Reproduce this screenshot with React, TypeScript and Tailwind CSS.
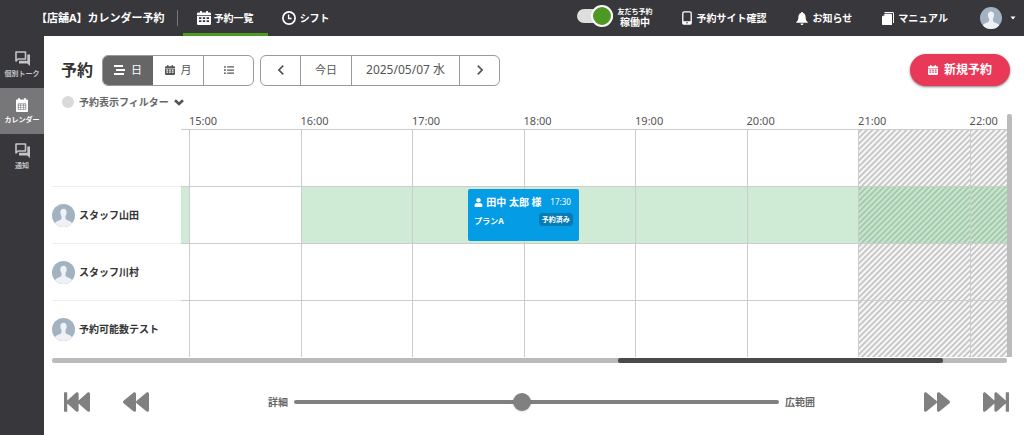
import React from "react";
import { FaUser, FaListUl, FaFastBackward, FaBackward, FaForward, FaFastForward } from "react-icons/fa";
import { MdKeyboardArrowLeft, MdKeyboardArrowRight } from "react-icons/md";

function Avatar({ className }: { className: string }) {
  return (
    <svg viewBox="0 0 24 24" className={className} aria-hidden="true">
      <circle cx="12" cy="12" r="12" fill="#a3b2c1" />
      <path
        d="M12 5c2 0 3.300 1.400 3.300 3.700 0 1.700-.5 3-1.200 3.900v2.800c.3.900 1.500 1.500 3.300 2.100 1.700.6 2.900 1.400 3.500 2.600A12 12 0 0 1 12 24a12 12 0 0 1-8.900-3.900c.6-1.200 1.800-2 3.500-2.600 1.800-.6 3-1.200 3.300-2.100v-2.800c-.7-.9-1.200-2.200-1.200-3.900C8.700 6.400 10 5 12 5z"
        fill="#eef2f7"
      />
    </svg>
  );
}

function ChatIcon() {
  return (
    <svg viewBox="0 0 15 15" className="size-[15px]" aria-hidden="true">
      <path d="M1 1h9.500v7H3L1 10z" fill="none" stroke="currentColor" strokeWidth="1.600" strokeLinejoin="round" />
      <path d="M12.300 3.500H15V15l-2.800-2.600H4V9.700h8.300z" fill="currentColor" />
    </svg>
  );
}

function CalendarGrid({ className }: { className: string }) {
  return (
    <svg viewBox="0 0 14 14" className={className} fill="currentColor" aria-hidden="true">
      <path
        fillRule="evenodd"
        d="M3 0h1.800v1.600h4.400V0H11v1.600h1.600c.8 0 1.400.5 1.400 1.300V4.200H0V2.900c0-.8.6-1.300 1.400-1.300H3zM0 5h14v7.700c0 .8-.6 1.300-1.400 1.300H1.400C.6 14 0 13.500 0 12.700zM2 6.200v1.800h2.400V6.200zm3.800 0v1.800h2.400V6.200zm3.800 0v1.800H12V6.200zM2 9.200V11h2.400V9.200zm3.800 0V11h2.400V9.200zm3.800 0V11H12V9.200z"
      />
    </svg>
  );
}

function SolidCalendar({ className }: { className: string }) {
  return (
    <svg viewBox="0 0 12 14" className={className} aria-hidden="true">
      <path
        fill="currentColor"
        fillRule="evenodd"
        d="M2.200 0h1.600v1.500h4.400V0h1.600v1.500h1c.7 0 1.200.5 1.200 1.200v10c0 .7-.5 1.300-1.200 1.300H1.200C.5 14 0 13.400 0 12.700v-10c0-.7.5-1.200 1.200-1.200h1zM1.800 5.500v6.300h8.400V5.500z"
      />
      <path
        fill="currentColor"
        d="M2.600 6.300h1.900v1.300H2.600zm2.500 0h1.900v1.300H5.100zm2.500 0h1.900v1.300H7.600zM2.600 8.100h1.900v1.300H2.600zm2.500 0h1.900v1.300H5.100zm2.500 0h1.900v1.300H7.600zM2.600 9.900h1.900v1.300H2.600zm2.500 0h1.900v1.300H5.100zm2.500 0h1.900v1.300H7.600z"
      />
    </svg>
  );
}

function ClockIcon() {
  return (
    <svg viewBox="0 0 14 14" className="size-3.5" fill="none" stroke="#fff" aria-hidden="true">
      <circle cx="7" cy="7" r="6.100" strokeWidth="1.700" />
      <path d="M6.600 3.500v4h3" strokeWidth="1.400" />
    </svg>
  );
}

function TimelineIcon() {
  return (
    <svg viewBox="0 0 11 10" className="h-2.5 w-[11px]" stroke="currentColor" strokeWidth="1.800" aria-hidden="true">
      <path d="M0 1h9M2 5h9M0 9h10" />
    </svg>
  );
}

function PhoneIcon() {
  return (
    <svg viewBox="0 0 10 14" className="h-3.5 w-2.5" aria-hidden="true">
      <rect x="0.800" y="0.800" width="8.400" height="12.400" rx="1.300" fill="none" stroke="#fff" strokeWidth="1.300" />
      <path d="M1 10.200h8V13H1z" fill="#fff" />
      <circle cx="5" cy="11.700" r="0.800" fill="#38373c" />
    </svg>
  );
}

function BellIcon() {
  return (
    <svg viewBox="0 0 12 13" className="h-[13px] w-3" fill="#fff" aria-hidden="true">
      <path d="M6 0c.6 0 1 .4 1 1 1.700.5 2.600 2 2.600 3.900 0 2.700.8 3.900 2.200 5.300v.6H.2v-.6C1.600 8.800 2.400 7.600 2.400 4.900 2.400 3 3.300 1.500 5 1c0-.6.4-1 1-1zM4.600 11.400h2.800C7.400 12.300 6.800 13 6 13s-1.400-.7-1.400-1.600z" />
    </svg>
  );
}

function BookIcon() {
  return (
    <svg viewBox="0 0 12 13" className="h-[13px] w-3" aria-hidden="true">
      <path d="M3 0h7.500c.8 0 1.500.7 1.500 1.500V11h-1V1.500c0-.3-.2-.5-.5-.5H2z" fill="#fff" />
      <path d="M2.600 1.800h6.600c.5 0 .8.3.8.8V13H1c-.6 0-1-.4-1-1V4.400z" fill="#fff" />
      <path d="M.4 3.800 2.300 1.900v1.900z" fill="#38373c" />
    </svg>
  );
}

const hours = ["15:00", "16:00", "17:00", "18:00", "19:00", "20:00", "21:00", "22:00"];

const rows = [
  { name: "", open: false },
  { name: "スタッフ山田", open: true },
  { name: "スタッフ川村", open: false },
  { name: "予約可能数テスト", open: false },
];

const hatch =
  "bg-[repeating-linear-gradient(-45deg,#c8c8c8_0px,#c8c8c8_1px,#f8f8f8_2px,#f8f8f8_3px,#c8c8c8_4px)]";
const hatchOpen =
  "bg-[repeating-linear-gradient(-45deg,#a6caae_0px,#a6caae_1px,#c9e6cf_2px,#c9e6cf_3px,#a6caae_4px)]";

function cellColor(open: boolean, index: number) {
  if (index >= 6) return open ? hatchOpen : hatch;
  return open && index > 0 ? "bg-[#d0ebd5]" : "";
}

function Booking() {
  return (
    <a
      href="#booking"
      className="absolute top-0.5 left-1/2 z-10 flex h-[52px] w-full flex-col gap-0.5 rounded-xs bg-[#059ce6] pt-1 pr-1.5 pl-1.5 text-white"
    >
      <span className="flex items-center gap-[3px] leading-[18px] whitespace-nowrap">
        <FaUser className="size-[9px] shrink-0" />
        <span className="text-[10px] font-bold">田中 太郎 様</span>
        <span className="ml-auto pr-0.5 text-[8px]">17:30</span>
      </span>
      <span className="flex items-start justify-between">
        <span className="pt-0.5 text-[8px] leading-3 font-bold">プランA</span>
        <span className="rounded-sm bg-[#087bb5] px-[3px] text-[7px] leading-[13px] font-bold">予約済み</span>
      </span>
    </a>
  );
}

function Header() {
  return (
    <header className="flex h-9 items-center bg-[#38373c] pr-2 pl-9 text-[10px] font-bold whitespace-nowrap text-white">
      <h1 className="text-[11px]">【店舗A】カレンダー予約</h1>
      <div className="ml-3 h-4 w-px bg-[#77767a]" />
      <nav className="ml-[5px] flex h-full">
        <a href="#list" className="flex items-center gap-[3px] border-b-3 border-[#4c9a21] px-3.5 pt-[3px]">
          <CalendarGrid className="size-3.5" />
          予約一覧
        </a>
        <a href="#shift" className="flex items-center gap-1 px-3.5">
          <ClockIcon />
          シフト
        </a>
      </nav>
      <div className="ml-auto flex items-center">
        <label className="flex cursor-pointer items-center gap-1">
          <input type="checkbox" role="switch" defaultChecked className="peer sr-only" />
          <span className="mb-1 flex h-3.5 w-9 items-center justify-end rounded-full bg-[#dedede]">
            <span className="size-[22px] shrink-0 rounded-full border-2 border-white bg-[#4c9a21]" />
          </span>
          <span className="flex flex-col items-center text-[10px] leading-[13px]">
            <span className="text-[7px] leading-[9px]">友だち予約</span>
            稼働中
          </span>
        </label>
        <a href="#site" className="ml-[30px] flex items-center gap-1">
          <PhoneIcon />
          予約サイト確認
        </a>
        <a href="#news" className="ml-[30px] flex items-center gap-1">
          <BellIcon />
          お知らせ
        </a>
        <a href="#manual" className="ml-[30px] flex items-center gap-1">
          <BookIcon />
          マニュアル
        </a>
        <button type="button" aria-label="アカウント" className="ml-8 flex items-center gap-2">
          <Avatar className="size-[22px]" />
          <svg viewBox="0 0 6 4" className="h-1 w-1.5" fill="#fff" aria-hidden="true">
            <path d="M.5.5h5L3 3.500z" />
          </svg>
        </button>
      </div>
    </header>
  );
}

const side =
  "flex h-[46px] flex-col items-center justify-center gap-[3px] text-[7px] leading-[10px] font-bold whitespace-nowrap";

function Sidebar() {
  return (
    <nav className="w-11 shrink-0 bg-[#38373c] pt-1.5 text-[#c4c4c6]">
      <a href="#talk" className={side}>
        <ChatIcon />
        個別トーク
      </a>
      <a href="#calendar" className={side + " bg-[#77777a] text-white"}>
        <SolidCalendar className="h-3.5 w-3" />
        カレンダー
      </a>
      <a href="#notice" className={side}>
        <ChatIcon />
        通知
      </a>
    </nav>
  );
}

function Toolbar() {
  return (
    <div className="flex items-center pr-3.5 pl-[17px] text-[11px] whitespace-nowrap text-[#555]">
      <h2 className="text-base font-bold text-[#333]">予約</h2>
      <div className="ml-[9px] flex h-[31px] overflow-hidden rounded-md border border-[#999]">
        <button type="button" className="flex w-[50px] items-center justify-center gap-1.5 bg-[#666] text-white">
          <TimelineIcon />日
        </button>
        <button type="button" className="flex w-[50px] items-center justify-center gap-1.5">
          <CalendarGrid className="size-2.5" />月
        </button>
        <button
          type="button"
          aria-label="リスト"
          className="flex w-[50px] items-center justify-center border-l border-[#999]"
        >
          <FaListUl className="size-2.5" />
        </button>
      </div>
      <div className="ml-1.5 flex h-[31px] divide-x divide-[#999] overflow-hidden rounded-md border border-[#999]">
        <button type="button" aria-label="前の日" className="flex w-10 items-center justify-center">
          <MdKeyboardArrowLeft className="size-5" />
        </button>
        <button type="button" className="w-[51px]">今日</button>
        <button type="button" className="w-[108px] text-xs">2025/05/07 水</button>
        <button type="button" aria-label="次の日" className="flex w-[39px] items-center justify-center">
          <MdKeyboardArrowRight className="size-5" />
        </button>
      </div>
      <button
        type="button"
        className="ml-auto flex h-8 w-[100px] items-center justify-center gap-1.5 rounded-full bg-[#e83a58] text-xs font-bold text-white shadow-sm shadow-black/40"
      >
        <CalendarGrid className="size-2.5" />
        新規予約
      </button>
    </div>
  );
}

function Timeline() {
  return (
    <div className="pr-3 pl-2">
      <div className="flex">
        <div className="min-w-0 flex-1">
          <table className="w-full table-fixed border-separate border-spacing-0 text-[#333]">
            <colgroup>
              <col className="w-[129px]" />
              <col className="w-2" />
              <col span={22} />
            </colgroup>
            <thead>
              <tr className="h-[17px] text-left text-[11px] leading-[17px] text-[#555]">
                <td />
                <td />
                {hours.map((hour, i) => (
                  <th key={hour} scope="col" colSpan={i === 7 ? 1 : 3} className="p-0 font-normal whitespace-nowrap">
                    {hour}
                  </th>
                ))}
              </tr>
            </thead>
            <tbody>
              {rows.map((row, r) => (
                <tr key={r} className="h-[57px]">
                  <th
                    scope="row"
                    className={
                      (r === 0 ? "border-transparent" : "border-[#eee]") + " border-t p-0 text-left text-[10px] font-bold"
                    }
                  >
                    {row.name && (
                      <div className="flex items-center gap-1">
                        <Avatar className="size-[23px]" />
                        {row.name}
                      </div>
                    )}
                  </th>
                  <td className={(row.open ? "bg-[#d0ebd5]" : "") + " border-t border-[#ccc] p-0"} />
                  {hours.map((hour, i) => (
                    <td
                      key={hour}
                      colSpan={i === 7 ? 1 : 3}
                      className={cellColor(row.open, i) + " relative border-t border-l border-[#ccc] p-0"}
                    >
                      {row.open && i === 2 && <Booking />}
                    </td>
                  ))}
                </tr>
              ))}
            </tbody>
          </table>
        </div>
        <div className="mt-0.5 w-[5px] rounded-t-xs bg-[#bbb]" />
      </div>
      <div className="mt-px mr-[5px] h-[5px] rounded-xs bg-[#bbb]">
        <div className="ml-[59.3%] h-full w-[34%] rounded-xs bg-[#4a4a4a]" />
      </div>
    </div>
  );
}

function Controls() {
  const jump = "size-[26px]";
  return (
    <div className="mt-[26px] flex items-center pr-[15px] pl-5 text-[#808080]">
      <button type="button" aria-label="最初へ"><FaFastBackward className={jump} /></button>
      <button type="button" aria-label="前へ" className="ml-[33px]"><FaBackward className={jump} /></button>
      <label className="mr-[109px] ml-[119px] flex flex-1 items-center gap-1.5 text-[10px] font-bold whitespace-nowrap text-[#666]">
        詳細
        <input
          type="range"
          min="0"
          max="100"
          defaultValue="47"
          className="h-1 min-w-0 flex-1 appearance-none rounded-full bg-[#808080] [&::-webkit-slider-thumb]:size-[18px] [&::-webkit-slider-thumb]:appearance-none [&::-webkit-slider-thumb]:rounded-full [&::-webkit-slider-thumb]:bg-[#808080] [&::-webkit-slider-thumb]:shadow-sm"
        />
        広範囲
      </label>
      <button type="button" aria-label="次へ"><FaForward className={jump} /></button>
      <button type="button" aria-label="最後へ" className="ml-[33px]"><FaFastForward className={jump} /></button>
    </div>
  );
}

export default function App() {
  return (
    <div className="flex min-h-screen flex-col bg-white font-['Noto_Sans','Noto_Sans_CJK_JP',sans-serif]">
      <Header />
      <div className="flex flex-1">
        <Sidebar />
        <main className="min-w-0 flex-1 pt-[18px]">
          <Toolbar />
          <details className="mt-1.5 ml-[18px] w-fit text-[10px] font-bold text-[#666]">
            <summary className="flex h-5 cursor-pointer list-none items-center gap-[5px]">
              <span className="size-3 rounded-full bg-[#d9d9d9]" />
              予約表示フィルター
              <svg viewBox="0 0 10 7" className="h-[7px] w-2.5" fill="none" stroke="#555" strokeWidth="2.600" aria-hidden="true">
                <path d="M1 1.200 5 5l4-3.800" />
              </svg>
            </summary>
          </details>
          <Timeline />
          <Controls />
        </main>
      </div>
    </div>
  );
}
